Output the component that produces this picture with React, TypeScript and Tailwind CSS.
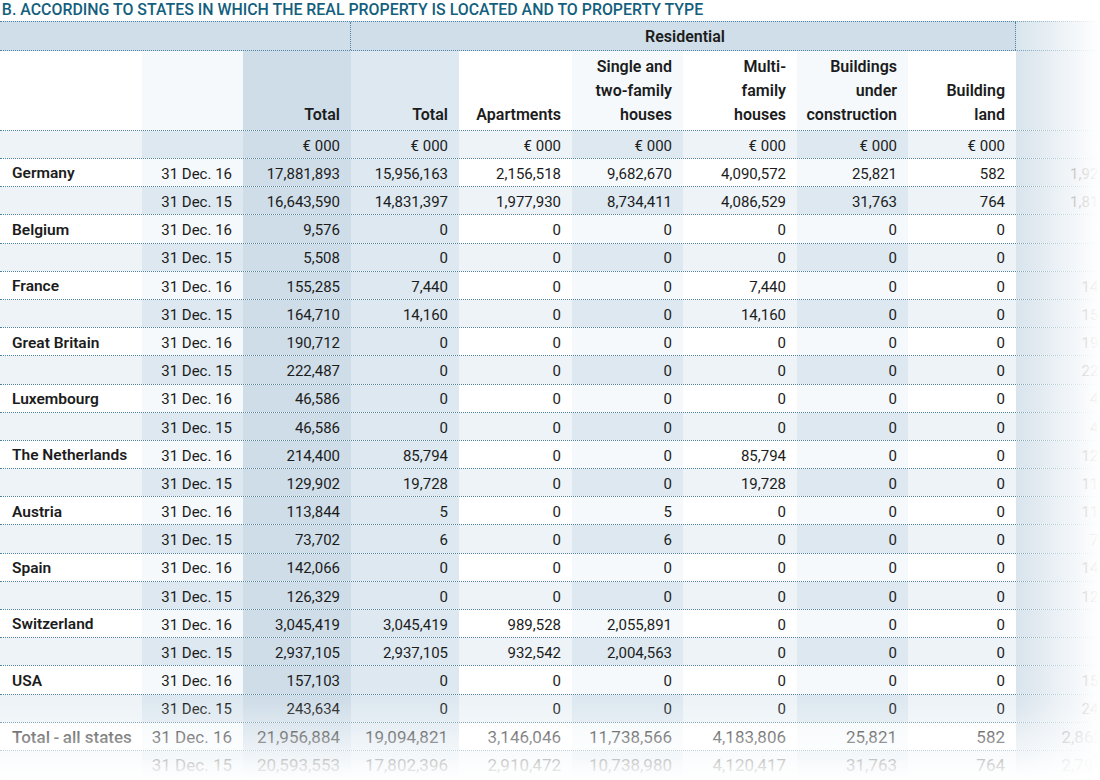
import React from "react";

const colW = [
  "w-[142px]",
  "w-[101px]",
  "w-[108px]",
  "w-[108px]",
  "w-[113px]",
  "w-[111px]",
  "w-[114px]",
  "w-[111px]",
  "w-[108px]",
  "w-[130px]",
];
const kinds = ["p", "l", "d", "m", "p", "l", "p", "l", "p", "d"] as const;
type Kind = (typeof kinds)[number];

const lightBg: Record<Kind, string> = {
  p: "bg-white",
  l: "bg-[#f5f9fb]",
  d: "bg-[#cfdde8]",
  m: "bg-[#dde8f0]",
};
const stripeBg: Record<Kind, string> = {
  p: "bg-[#edf3f7]",
  l: "bg-[#dde8f0]",
  d: "bg-[#cfdde8]",
  m: "bg-[#dde8f0]",
};

type Entry = { name: string; a: string[]; b: string[] };

const z = (first: string, second: string, last: string) => [first, "0", "0", "0", "0", "0", "0", last];

const data: Entry[] = [
  {
    name: "Germany",
    a: ["17,881,893", "15,956,163", "2,156,518", "9,682,670", "4,090,572", "25,821", "582", "1,925,730"],
    b: ["16,643,590", "14,831,397", "1,977,930", "8,734,411", "4,086,529", "31,763", "764", "1,812,193"],
  },
  { name: "Belgium", a: z("9,576", "0", "9,576"), b: z("5,508", "0", "5,508") },
  {
    name: "France",
    a: ["155,285", "7,440", "0", "0", "7,440", "0", "0", "147,845"],
    b: ["164,710", "14,160", "0", "0", "14,160", "0", "0", "150,550"],
  },
  { name: "Great Britain", a: z("190,712", "0", "190,712"), b: z("222,487", "0", "222,487") },
  { name: "Luxembourg", a: z("46,586", "0", "46,586"), b: z("46,586", "0", "46,586") },
  {
    name: "The Netherlands",
    a: ["214,400", "85,794", "0", "0", "85,794", "0", "0", "128,606"],
    b: ["129,902", "19,728", "0", "0", "19,728", "0", "0", "110,174"],
  },
  {
    name: "Austria",
    a: ["113,844", "5", "0", "5", "0", "0", "0", "113,839"],
    b: ["73,702", "6", "0", "6", "0", "0", "0", "73,696"],
  },
  { name: "Spain", a: z("142,066", "0", "142,066"), b: z("126,329", "0", "126,329") },
  {
    name: "Switzerland",
    a: ["3,045,419", "3,045,419", "989,528", "2,055,891", "0", "0", "0", "0"],
    b: ["2,937,105", "2,937,105", "932,542", "2,004,563", "0", "0", "0", "0"],
  },
  { name: "USA", a: z("157,103", "0", "157,103"), b: z("243,634", "0", "243,634") },
];

const total: Entry = {
  name: "Total\u2009-\u2009all states",
  a: ["21,956,884", "19,094,821", "3,146,046", "11,738,566", "4,183,806", "25,821", "582", "2,862,063"],
  b: ["20,593,553", "17,802,396", "2,910,472", "10,738,980", "4,120,417", "31,763", "764", "2,791,157"],
};

const border = "border-b border-dotted border-[#4f83a3]";

function DataRow({
  name,
  date,
  values,
  stripe,
  big,
}: {
  name: string;
  date: string;
  values: string[];
  stripe: boolean;
  big?: boolean;
}) {
  const cells = [name, date, ...values];
  const bgMap = stripe ? stripeBg : lightBg;
  return (
    <div className={`flex h-[28.2px] shrink-0 ${border} ${big ? "text-[17px]" : "text-[15px]"}`}>
      {cells.map((c, i) => (
        <div
          key={i}
          className={`${colW[i]} shrink-0 ${bgMap[kinds[i]]} flex items-center pt-[3px] ${
            i === 0
              ? big
                ? "pl-[12px] font-medium"
                : "pl-[12px] font-semibold text-[15.5px]"
              : "justify-end pr-[11px]"
          } whitespace-nowrap`}
        >
          {c}
        </div>
      ))}
    </div>
  );
}

const headers: React.ReactNode[] = [
  "",
  "",
  "Total",
  "Total",
  "Apartments",
  <>
    Single and
    <br />
    two-family
    <br />
    houses
  </>,
  <>
    Multi-
    <br />
    family
    <br />
    houses
  </>,
  <>
    Buildings
    <br />
    under
    <br />
    construction
  </>,
  <>
    Building
    <br />
    land
  </>,
  "",
];

export default function App() {
  return (
    <div className="relative w-[1100px] h-[780px] overflow-hidden bg-white text-[#1c1c1c] font-['Roboto','Liberation_Sans',sans-serif]">
      <div className="h-[21px] leading-[18px] text-[17px] font-medium text-[#145f7e] whitespace-nowrap">
        <div className="inline-block origin-left scale-x-[0.935] pl-[2px]">
          B. ACCORDING TO STATES IN WHICH THE REAL PROPERTY IS LOCATED AND TO PROPERTY TYPE
        </div>
      </div>

      <div className="flex flex-col w-[1146px]">
        {/* group header */}
        <div className="flex h-[30px] shrink-0 border-y border-dotted border-[#4f83a3] bg-[#cfdee8] text-[16px] font-semibold">
          <div className="w-[351px] shrink-0 border-r border-dotted border-[#4f83a3]" />
          <div className="w-[665px] shrink-0 flex items-center justify-center pt-[1px] pl-[4px] border-r border-dotted border-[#4f83a3]">
            Residential
          </div>
          <div className="w-[130px] shrink-0" />
        </div>

        {/* column header */}
        <div className={`flex h-[80px] shrink-0 ${border} text-[16px] font-semibold leading-[24px]`}>
          {headers.map((h, i) => (
            <div
              key={i}
              className={`${colW[i]} shrink-0 ${lightBg[kinds[i]]} flex items-end justify-end text-right pr-[11px] pb-[3px]`}
            >
              <div>{h}</div>
            </div>
          ))}
        </div>

        {/* units */}
        <div className={`flex h-[28px] shrink-0 ${border} text-[15px]`}>
          {colW.map((w, i) => (
            <div
              key={i}
              className={`${w} shrink-0 ${stripeBg[kinds[i]]} flex items-center justify-end pt-[3px] pr-[11px]`}
            >
              {i >= 2 ? "€ 000" : ""}
            </div>
          ))}
        </div>

        {data.map((e) => (
          <React.Fragment key={e.name}>
            <DataRow name={e.name} date="31 Dec. 16" values={e.a} stripe={false} />
            <DataRow name="" date="31 Dec. 15" values={e.b} stripe={true} />
          </React.Fragment>
        ))}
        <DataRow name={total.name} date="31 Dec. 16" values={total.a} stripe={false} big />
        <DataRow name="" date="31 Dec. 15" values={total.b} stripe={true} big />
      </div>

      {/* right fade */}
      <div className="pointer-events-none absolute left-[1016px] top-0 bottom-0 w-[84px] bg-linear-to-r from-white/20 to-white" />
      {/* bottom fade */}
      <div className="pointer-events-none absolute left-0 right-0 top-[700px] h-[80px] bg-linear-to-b from-white/0 to-white" />
    </div>
  );
}
